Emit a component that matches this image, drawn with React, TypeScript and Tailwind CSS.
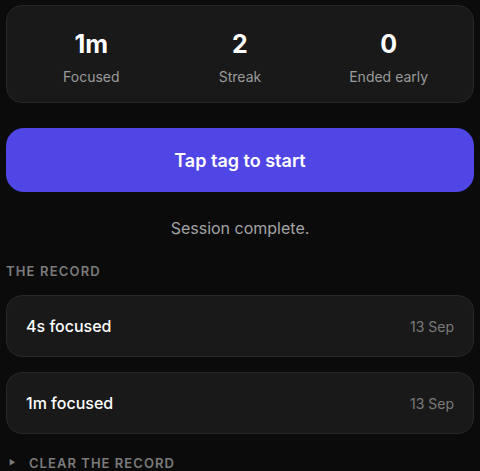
const stats = [
  { value: "1m", label: "Focused" },
  { value: "2", label: "Streak" },
  { value: "0", label: "Ended early" },
];

const records = [
  { text: "4s focused", date: "13 Sep" },
  { text: "1m focused", date: "13 Sep" },
];

export default function App() {
  return (
    <div className="min-h-screen bg-[#0b0b0b] px-[6px] pt-[5px] font-['Inter',sans-serif] text-white">
      {/* Stats */}
      <div className="grid grid-cols-3 rounded-[16px] border border-[#272727] bg-[#191919] px-[10px] pt-[22px] pb-[15px]">
        {stats.map((s) => (
          <div key={s.label} className="flex flex-col items-center gap-[7px]">
            <span className="text-[25px] leading-8 font-bold">{s.value}</span>
            <span className="text-[14px] leading-5 text-[#9b9b9b]">{s.label}</span>
          </div>
        ))}
      </div>

      <button className="mt-[25px] flex h-16 w-full items-center justify-center rounded-[18px] bg-[#4f46e5] text-[18px] font-semibold">
        Tap tag to start
      </button>

      <p className="mt-6 text-center text-[16px] leading-6 text-[#a3a3a3]">Session complete.</p>

      <h2 className="mt-[23px] text-[13px] leading-4 font-semibold tracking-[0.09em] text-[#7a7a7a]">
        THE RECORD
      </h2>

      <ul className="mt-4 flex flex-col gap-[15px]">
        {records.map((r, i) => (
          <li
            key={i}
            className="flex h-[62px] items-center justify-between rounded-[16px] border border-[#272727] bg-[#191919] px-[19px]"
          >
            <span className="text-[16px] font-medium">{r.text}</span>
            <span className="text-[14px] text-[#7a7a7a]">{r.date}</span>
          </li>
        ))}
      </ul>

      <div className="mt-[19px] flex items-center leading-5">
        <span className="ml-[3px] w-[20px] text-[7px] text-[#7a7a7a]">▶</span>
        <span className="text-[13px] font-semibold tracking-[0.08em] text-[#7a7a7a]">CLEAR THE RECORD</span>
      </div>
    </div>
  );
}
